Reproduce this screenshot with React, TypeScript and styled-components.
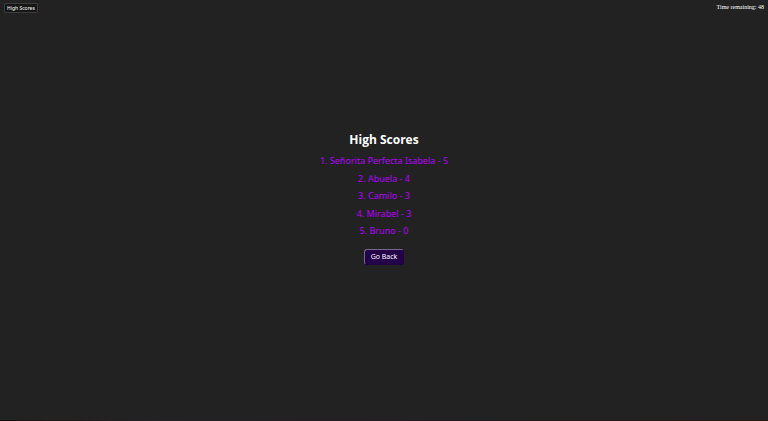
import React from "react";
import styled, { createGlobalStyle } from "styled-components";

const GlobalStyle = createGlobalStyle`
  * { box-sizing: border-box; }
  body { margin: 0; background: #222222; }
`;

const Page = styled.div`
  min-height: 100vh;
  display: flex;
  flex-direction: column;
`;

const TopBar = styled.header`
  display: flex;
  justify-content: space-between;
  align-items: flex-start;
  padding: 3px 4px 0;
`;

const ScoresButton = styled.button`
  height: 10px;
  padding: 0 2px;
  border: 1px solid #3c3c3c;
  border-radius: 1px;
  background: #161616;
  color: #ffffff;
  font: 5px/8px "Noto Sans", sans-serif;
  white-space: nowrap;
`;

const Timer = styled.div`
  color: #ffffff;
  font: 6px/8px "Liberation Serif", serif;
`;

const Main = styled.main`
  flex: 1;
  display: flex;
  flex-direction: column;
  align-items: center;
  padding-top: 118px;
  font-family: "Open Sans", "Noto Sans", sans-serif;
`;

const Title = styled.h1`
  margin: 0 0 6px;
  color: #ffffff;
  font-size: 12px;
  line-height: 18px;
  font-weight: 700;
`;

const ScoreList = styled.ol`
  display: flex;
  flex-direction: column;
  justify-content: space-between;
  min-height: 82px;
  margin: 0;
  padding: 0;
  list-style: none;
  text-align: center;
`;

const ScoreItem = styled.li`
  color: #b400ff;
  font-family: "Noto Sans", sans-serif;
  font-size: 9px;
  line-height: 12px;
`;

const BackButton = styled.button`
  margin-top: 12px;
  height: 16px;
  padding: 0 6px;
  border: 1px solid;
  border-color: #77658c #240044 #240044 #77658c;
  border-radius: 3px;
  background: #240048;
  color: #ffffff;
  font: 7px/14px "Noto Sans", sans-serif;
`;

const BottomEdge = styled.footer`
  height: 1px;
  background: linear-gradient(90deg, #1c0c0c, #2a2026 20%, #26161f 60%, #30160a);
`;

const scores = [
  { name: "Señorita Perfecta Isabela", score: 5 },
  { name: "Abuela", score: 4 },
  { name: "Camilo", score: 3 },
  { name: "Mirabel", score: 3 },
  { name: "Bruno", score: 0 },
];

export default function App() {
  return (
    <Page>
      <GlobalStyle />
      <TopBar>
        <ScoresButton type="button">High Scores</ScoresButton>
        <Timer>Time remaining: 48</Timer>
      </TopBar>
      <Main>
        <Title>High Scores</Title>
        <ScoreList>
          {scores.map((entry, i) => (
            <ScoreItem key={entry.name}>
              {`${i + 1}. ${entry.name} - ${entry.score}`}
            </ScoreItem>
          ))}
        </ScoreList>
        <BackButton type="button">Go Back</BackButton>
      </Main>
      <BottomEdge />
    </Page>
  );
}
